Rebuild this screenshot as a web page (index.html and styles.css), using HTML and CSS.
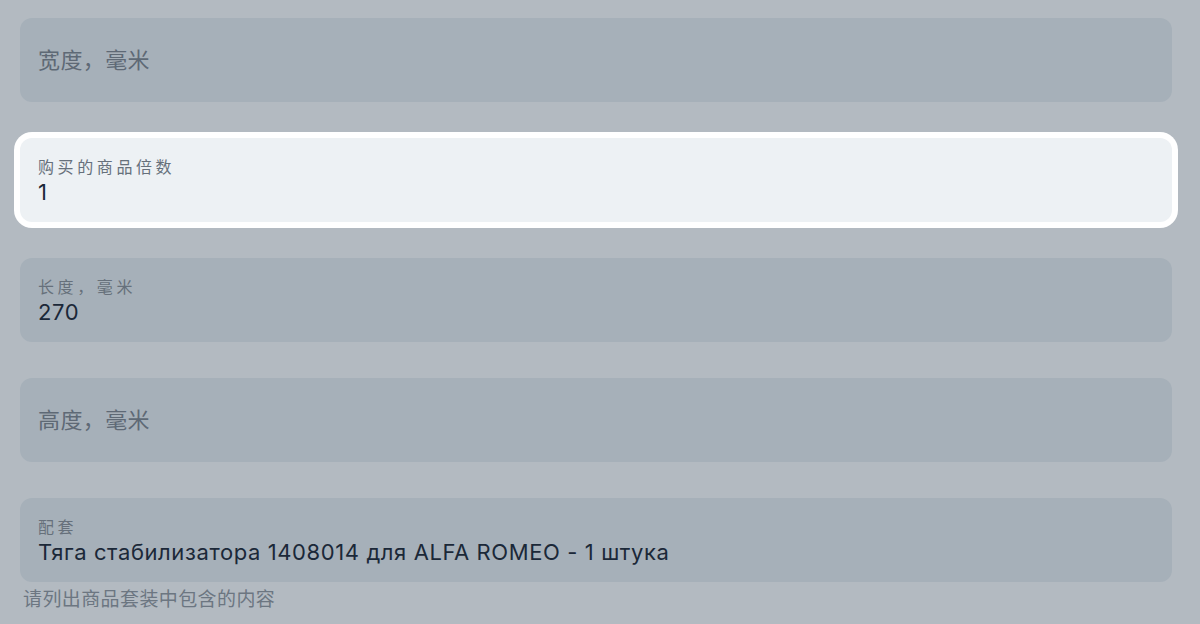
FILE: index.html
```html
<!DOCTYPE html>
<html lang="zh">
<head>
    <meta charset="UTF-8">
    <meta name="viewport" content="width=device-width, initial-scale=1.0">
    <title>商品参数</title>
    <link rel="stylesheet" href="styles.css">
</head>
<body>
    <div class="form">
        <div class="field">
            <div class="field-box empty">
                <span class="placeholder">宽度，毫米</span>
            </div>
        </div>

        <div class="field">
            <div class="field-box focused">
                <span class="label">购买的商品倍数</span>
                <span class="value">1</span>
            </div>
        </div>

        <div class="field">
            <div class="field-box">
                <span class="label">长度，毫米</span>
                <span class="value">270</span>
            </div>
        </div>

        <div class="field">
            <div class="field-box empty">
                <span class="placeholder">高度，毫米</span>
            </div>
        </div>

        <div class="field">
            <div class="field-box">
                <span class="label">配套</span>
                <span class="value">Тяга стабилизатора 1408014 для ALFA ROMEO - 1 штука</span>
            </div>
            <div class="hint">请列出商品套装中包含的内容</div>
        </div>
    </div>
</body>
</html>
```

FILE: styles.css
```css
body {
    margin: 0;
    background: #b3bac1;
    font-family: Inter, "Noto Sans CJK SC", sans-serif;
    overflow: hidden;
}

.form {
    display: flex;
    flex-direction: column;
    gap: 36px;
    padding: 18px 28px 0 20px;
}

.field {
    display: flex;
    flex-direction: column;
}

.field-box {
    box-sizing: border-box;
    height: 84px;
    padding: 18px 18px 0;
    background: #a6b0b9;
    border-radius: 12px;
    display: flex;
    flex-direction: column;
}

.field-box.empty {
    padding-top: 0;
    justify-content: center;
}

.field-box.focused {
    background: #edf1f4;
    box-shadow: 0 0 0 6px #ffffff;
}

.label {
    font-size: 16px;
    line-height: 22px;
    letter-spacing: 3.6px;
    color: #66707b;
}

.value {
    font-size: 22px;
    line-height: 28px;
    letter-spacing: 0.6px;
    color: #1b2838;
}

.placeholder {
    font-size: 22px;
    line-height: 28px;
    letter-spacing: 0.4px;
    color: #5e6975;
}

.hint {
    margin-top: 6px;
    padding-left: 3px;
    font-size: 19px;
    line-height: 24px;
    letter-spacing: 0.4px;
    color: #6c7681;
}
```
